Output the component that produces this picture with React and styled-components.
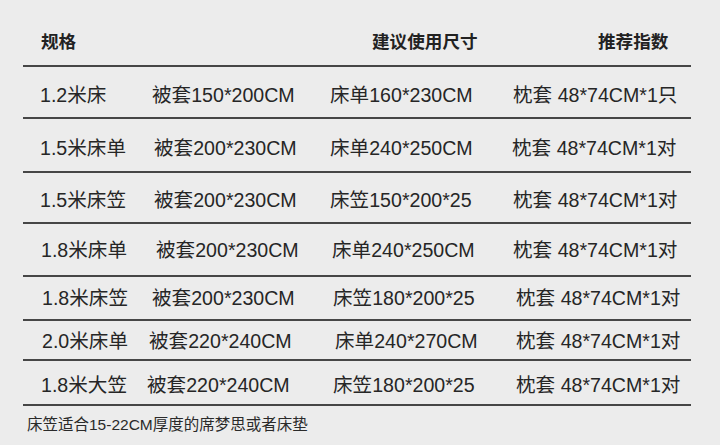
import React from "react";
import styled, { createGlobalStyle } from "styled-components";

const Global = createGlobalStyle`
  html, body { margin: 0; padding: 0; background: #ececec; }
  body { font-family: "Liberation Sans", "Noto Sans CJK SC", sans-serif; color: #262626; }
`;

const Page = styled.div`
  width: 720px;
  height: 445px;
  background: #ececec;
  box-sizing: border-box;
  padding-left: 23px;
  overflow: hidden;
`;

const Table = styled.div`
  width: 668px;
  display: flex;
  flex-direction: column;
`;

const HeaderRow = styled.div`
  height: 67px;
  box-sizing: border-box;
  padding-top: 32px;
  border-bottom: 2px solid #464646;
  display: grid;
  grid-template-columns: 331px 226px 1fr;
  padding-left: 18px;
  font-size: 17.6px;
  font-weight: 700;
  line-height: 20px;
  color: #222;
`;

const Row = styled.div`
  height: ${(p) => p.$h}px;
  box-sizing: border-box;
  padding-top: ${(p) => p.$pt}px;
  padding-left: ${(p) => p.$pl}px;
  border-bottom: 2px solid #464646;
  display: grid;
  grid-template-columns: ${(p) => p.$cols};
  align-items: center;
  font-size: 19.6px;
  line-height: 22px;
  white-space: nowrap;
`;

const Cell = styled.span``;

const Note = styled.div`
  padding: 10px 0 0 4px;
  font-size: 15.5px;
  line-height: 18px;
  color: #2a2a2a;
`;

const rows = [
  { h: 52, pt: 6, x: [40, 152, 330, 513], c: ["1.2米床", "被套150*200CM", "床单160*230CM", "枕套 48*74CM*1只"] },
  { h: 54, pt: 6, x: [40, 154, 330, 512], c: ["1.5米床单", "被套200*230CM", "床单240*250CM", "枕套 48*74CM*1对"] },
  { h: 51, pt: 5, x: [40, 154, 330, 513], c: ["1.5米床笠", "被套200*230CM", "床笠150*200*25", "枕套 48*74CM*1对"] },
  { h: 53, pt: 1, x: [41, 156, 332, 513], c: ["1.8米床单", "被套200*230CM", "床单240*250CM", "枕套 48*74CM*1对"] },
  { h: 44, pt: 0, x: [42, 152, 333, 516], c: ["1.8米床笠", "被套200*230CM", "床笠180*200*25", "枕套 48*74CM*1对"] },
  { h: 40, pt: 2, x: [42, 149, 335, 516], c: ["2.0米床单", "被套220*240CM", "床单240*270CM", "枕套 48*74CM*1对"] },
  { h: 45, pt: 5, x: [41, 147, 333, 516], c: ["1.8米大笠", "被套220*240CM", "床笠180*200*25", "枕套 48*74CM*1对"] },
];

export default function App() {
  return (
    <Page>
      <Global />
      <Table>
        <HeaderRow>
          <Cell>规格</Cell>
          <Cell>建议使用尺寸</Cell>
          <Cell>推荐指数</Cell>
        </HeaderRow>
        {rows.map((r, i) => {
          const [a, b, c, d] = r.x;
          const cols = `${b - a}px ${c - b}px ${d - c}px 1fr`;
          return (
            <Row key={i} $h={r.h} $pt={r.pt} $pl={a - 23} $cols={cols}>
              {r.c.map((t, j) => (
                <Cell key={j}>{t}</Cell>
              ))}
            </Row>
          );
        })}
      </Table>
      <Note>床笠适合15-22CM厚度的席梦思或者床垫</Note>
    </Page>
  );
}
